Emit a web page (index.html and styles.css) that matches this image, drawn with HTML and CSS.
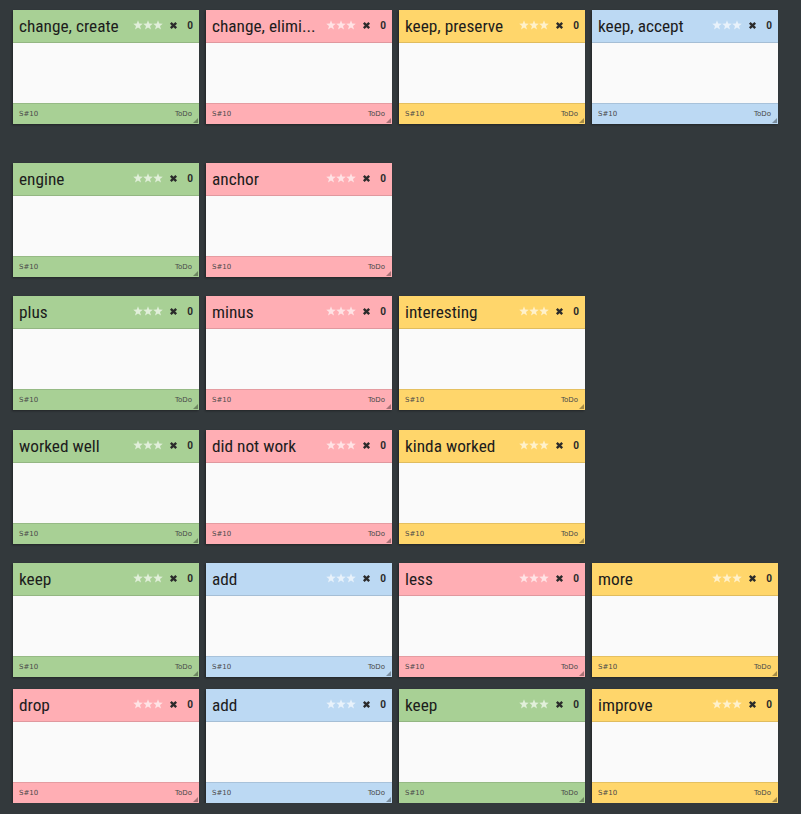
FILE: index.html
```html
<!DOCTYPE html>
<html lang="en">
  <head>
    <title>Retro board</title>
    <meta charset="UTF-8">
    <meta name="viewport" content="width=device-width, initial-scale=1.0">
    <link rel="stylesheet" href="styles.css">
  </head>

  <body>
    <svg width="0" height="0" class="defs">
      <defs>
        <symbol id="star" viewBox="0 0 10 10">
          <path d="M5 0.3 L6.2 3.6 L9.8 3.7 L7 5.9 L8 9.5 L5 7.4 L2 9.5 L3 5.9 L0.2 3.7 L3.8 3.6 Z"/>
        </symbol>
        <symbol id="cross" viewBox="0 0 10 10">
          <path d="M2 2 L8 8 M8 2 L2 8"/>
        </symbol>
      </defs>
    </svg>

    <div id="board">
      <div class="row row-1">
        <div class="card green"><div class="card-head"><span class="title">change, create</span><span class="tools"><span class="stars"><svg><use href="#star"/></svg><svg><use href="#star"/></svg><svg><use href="#star"/></svg></span><svg class="del"><use href="#cross"/></svg><span class="votes">0</span></span></div><div class="card-body"></div><div class="card-foot"><span>S#10</span><span>ToDo</span></div></div>
        <div class="card pink"><div class="card-head"><span class="title">change, elimi...</span><span class="tools"><span class="stars"><svg><use href="#star"/></svg><svg><use href="#star"/></svg><svg><use href="#star"/></svg></span><svg class="del"><use href="#cross"/></svg><span class="votes">0</span></span></div><div class="card-body"></div><div class="card-foot"><span>S#10</span><span>ToDo</span></div></div>
        <div class="card yellow"><div class="card-head"><span class="title">keep, preserve</span><span class="tools"><span class="stars"><svg><use href="#star"/></svg><svg><use href="#star"/></svg><svg><use href="#star"/></svg></span><svg class="del"><use href="#cross"/></svg><span class="votes">0</span></span></div><div class="card-body"></div><div class="card-foot"><span>S#10</span><span>ToDo</span></div></div>
        <div class="card blue"><div class="card-head"><span class="title">keep, accept</span><span class="tools"><span class="stars"><svg><use href="#star"/></svg><svg><use href="#star"/></svg><svg><use href="#star"/></svg></span><svg class="del"><use href="#cross"/></svg><span class="votes">0</span></span></div><div class="card-body"></div><div class="card-foot"><span>S#10</span><span>ToDo</span></div></div>
      </div>

      <div class="row row-2">
        <div class="card green"><div class="card-head"><span class="title">engine</span><span class="tools"><span class="stars"><svg><use href="#star"/></svg><svg><use href="#star"/></svg><svg><use href="#star"/></svg></span><svg class="del"><use href="#cross"/></svg><span class="votes">0</span></span></div><div class="card-body"></div><div class="card-foot"><span>S#10</span><span>ToDo</span></div></div>
        <div class="card pink"><div class="card-head"><span class="title">anchor</span><span class="tools"><span class="stars"><svg><use href="#star"/></svg><svg><use href="#star"/></svg><svg><use href="#star"/></svg></span><svg class="del"><use href="#cross"/></svg><span class="votes">0</span></span></div><div class="card-body"></div><div class="card-foot"><span>S#10</span><span>ToDo</span></div></div>
      </div>

      <div class="row row-3">
        <div class="card green"><div class="card-head"><span class="title">plus</span><span class="tools"><span class="stars"><svg><use href="#star"/></svg><svg><use href="#star"/></svg><svg><use href="#star"/></svg></span><svg class="del"><use href="#cross"/></svg><span class="votes">0</span></span></div><div class="card-body"></div><div class="card-foot"><span>S#10</span><span>ToDo</span></div></div>
        <div class="card pink"><div class="card-head"><span class="title">minus</span><span class="tools"><span class="stars"><svg><use href="#star"/></svg><svg><use href="#star"/></svg><svg><use href="#star"/></svg></span><svg class="del"><use href="#cross"/></svg><span class="votes">0</span></span></div><div class="card-body"></div><div class="card-foot"><span>S#10</span><span>ToDo</span></div></div>
        <div class="card yellow"><div class="card-head"><span class="title">interesting</span><span class="tools"><span class="stars"><svg><use href="#star"/></svg><svg><use href="#star"/></svg><svg><use href="#star"/></svg></span><svg class="del"><use href="#cross"/></svg><span class="votes">0</span></span></div><div class="card-body"></div><div class="card-foot"><span>S#10</span><span>ToDo</span></div></div>
      </div>

      <div class="row row-4">
        <div class="card green"><div class="card-head"><span class="title">worked well</span><span class="tools"><span class="stars"><svg><use href="#star"/></svg><svg><use href="#star"/></svg><svg><use href="#star"/></svg></span><svg class="del"><use href="#cross"/></svg><span class="votes">0</span></span></div><div class="card-body"></div><div class="card-foot"><span>S#10</span><span>ToDo</span></div></div>
        <div class="card pink"><div class="card-head"><span class="title">did not work</span><span class="tools"><span class="stars"><svg><use href="#star"/></svg><svg><use href="#star"/></svg><svg><use href="#star"/></svg></span><svg class="del"><use href="#cross"/></svg><span class="votes">0</span></span></div><div class="card-body"></div><div class="card-foot"><span>S#10</span><span>ToDo</span></div></div>
        <div class="card yellow"><div class="card-head"><span class="title">kinda worked</span><span class="tools"><span class="stars"><svg><use href="#star"/></svg><svg><use href="#star"/></svg><svg><use href="#star"/></svg></span><svg class="del"><use href="#cross"/></svg><span class="votes">0</span></span></div><div class="card-body"></div><div class="card-foot"><span>S#10</span><span>ToDo</span></div></div>
      </div>

      <div class="row row-5">
        <div class="card green"><div class="card-head"><span class="title">keep</span><span class="tools"><span class="stars"><svg><use href="#star"/></svg><svg><use href="#star"/></svg><svg><use href="#star"/></svg></span><svg class="del"><use href="#cross"/></svg><span class="votes">0</span></span></div><div class="card-body"></div><div class="card-foot"><span>S#10</span><span>ToDo</span></div></div>
        <div class="card blue"><div class="card-head"><span class="title">add</span><span class="tools"><span class="stars"><svg><use href="#star"/></svg><svg><use href="#star"/></svg><svg><use href="#star"/></svg></span><svg class="del"><use href="#cross"/></svg><span class="votes">0</span></span></div><div class="card-body"></div><div class="card-foot"><span>S#10</span><span>ToDo</span></div></div>
        <div class="card pink"><div class="card-head"><span class="title">less</span><span class="tools"><span class="stars"><svg><use href="#star"/></svg><svg><use href="#star"/></svg><svg><use href="#star"/></svg></span><svg class="del"><use href="#cross"/></svg><span class="votes">0</span></span></div><div class="card-body"></div><div class="card-foot"><span>S#10</span><span>ToDo</span></div></div>
        <div class="card yellow"><div class="card-head"><span class="title">more</span><span class="tools"><span class="stars"><svg><use href="#star"/></svg><svg><use href="#star"/></svg><svg><use href="#star"/></svg></span><svg class="del"><use href="#cross"/></svg><span class="votes">0</span></span></div><div class="card-body"></div><div class="card-foot"><span>S#10</span><span>ToDo</span></div></div>
      </div>

      <div class="row row-6">
        <div class="card pink"><div class="card-head"><span class="title">drop</span><span class="tools"><span class="stars"><svg><use href="#star"/></svg><svg><use href="#star"/></svg><svg><use href="#star"/></svg></span><svg class="del"><use href="#cross"/></svg><span class="votes">0</span></span></div><div class="card-body"></div><div class="card-foot"><span>S#10</span><span>ToDo</span></div></div>
        <div class="card blue"><div class="card-head"><span class="title">add</span><span class="tools"><span class="stars"><svg><use href="#star"/></svg><svg><use href="#star"/></svg><svg><use href="#star"/></svg></span><svg class="del"><use href="#cross"/></svg><span class="votes">0</span></span></div><div class="card-body"></div><div class="card-foot"><span>S#10</span><span>ToDo</span></div></div>
        <div class="card green"><div class="card-head"><span class="title">keep</span><span class="tools"><span class="stars"><svg><use href="#star"/></svg><svg><use href="#star"/></svg><svg><use href="#star"/></svg></span><svg class="del"><use href="#cross"/></svg><span class="votes">0</span></span></div><div class="card-body"></div><div class="card-foot"><span>S#10</span><span>ToDo</span></div></div>
        <div class="card yellow"><div class="card-head"><span class="title">improve</span><span class="tools"><span class="stars"><svg><use href="#star"/></svg><svg><use href="#star"/></svg><svg><use href="#star"/></svg></span><svg class="del"><use href="#cross"/></svg><span class="votes">0</span></span></div><div class="card-body"></div><div class="card-foot"><span>S#10</span><span>ToDo</span></div></div>
      </div>
    </div>
  </body>
</html>
```

FILE: styles.css
```css
body {
  margin: 0;
  background-color: #33393c;
  font-family: Roboto, "Liberation Sans", sans-serif;
}

.defs {
  position: absolute;
}

#board {
  padding: 10px 0 0 13px;
}

.row {
  display: flex;
  gap: 7px;
}

.row-2 { margin-top: 39px; }
.row-3 { margin-top: 19px; }
.row-4 { margin-top: 20px; }
.row-5 { margin-top: 19px; }
.row-6 { margin-top: 12px; }

.card {
  position: relative;
  width: 186px;
  height: 114px;
  display: flex;
  flex-direction: column;
  box-shadow: -1px 1px 2px rgba(0, 0, 0, 0.35);
}

.card-head {
  height: 32px;
  display: flex;
  align-items: center;
  padding: 0 6px 0 6px;
  border-bottom: 1px solid rgba(0, 0, 0, 0.12);
}

.title {
  flex: 1;
  min-width: 0;
  font-family: "Roboto Condensed", Roboto, sans-serif;
  font-size: 17.3px;
  color: #1c1c1c;
  white-space: nowrap;
  overflow: hidden;
}

.tools {
  display: flex;
  align-items: center;
  margin-top: -2px;
}

.stars {
  display: flex;
  margin-right: 6px;
}

.stars svg {
  width: 10px;
  height: 10px;
  fill: rgba(255, 255, 255, 0.65);
}

.del {
  width: 9px;
  height: 9px;
  stroke: #2b2b2b;
  stroke-width: 2.6;
  fill: none;
}

.votes {
  font-size: 10px;
  font-weight: bold;
  color: #2b2b2b;
  margin-left: 9px;
}

.card-body {
  flex: 1;
  background-color: #fafafa;
}

.card-foot {
  height: 19px;
  display: flex;
  justify-content: space-between;
  align-items: center;
  padding: 0 7px 1px 6px;
  font-family: "DejaVu Sans", sans-serif;
  font-size: 7px;
  color: #4a4a4a;
  border-top: 1px solid rgba(0, 0, 0, 0.1);
}

.card-foot::after {
  content: "";
  position: absolute;
  right: 1px;
  bottom: 1px;
  border-left: 5px solid transparent;
  border-bottom: 5px solid rgba(0, 0, 0, 0.35);
}

.green .card-head, .green .card-foot { background-color: #a8d095; }
.pink .card-head, .pink .card-foot { background-color: #ffaeb4; }
.yellow .card-head, .yellow .card-foot { background-color: #ffd66b; }
.blue .card-head, .blue .card-foot { background-color: #bcd9f3; }
```
